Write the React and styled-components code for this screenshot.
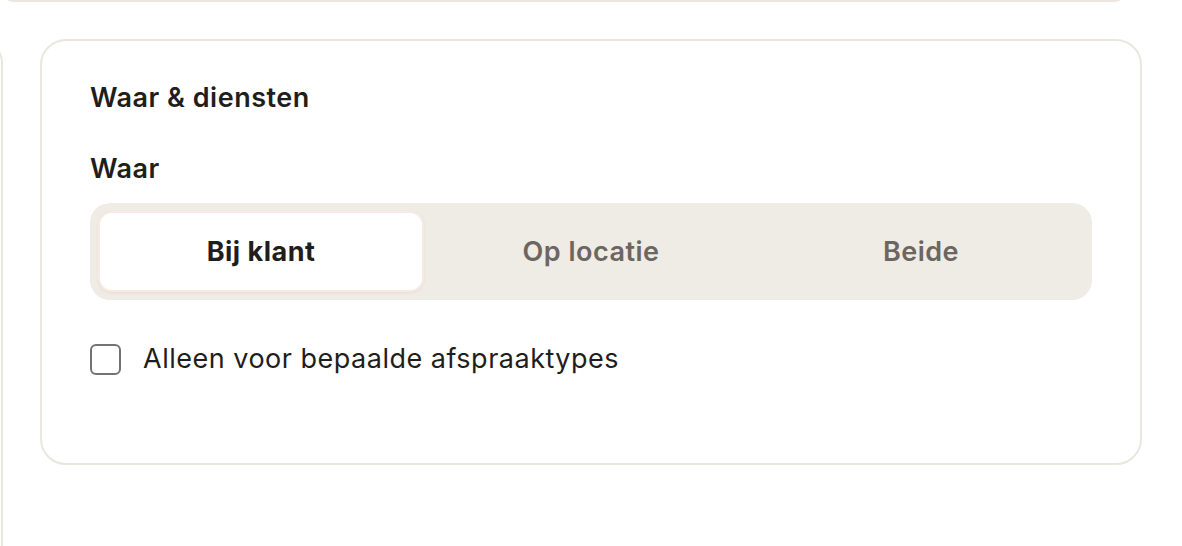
import React, { useState } from 'react';
import styled, { createGlobalStyle } from 'styled-components';

const GlobalStyle = createGlobalStyle`
  html, body {
    margin: 0;
    padding: 0;
    background: #ffffff;
  }
  body {
    font-family: Inter, "DejaVu Sans", sans-serif;
    color: #1f1e1c;
    letter-spacing: 0.5px;
    -webkit-font-smoothing: antialiased;
  }
`;

const Page = styled.div`
  width: 1182px;
  height: 546px;
  overflow: hidden;
  display: flex;
  flex-direction: column;
  gap: 37px;

  & > * {
    flex-shrink: 0;
  }
`;

const TopCard = styled.div`
  width: 1128px;
  height: 60px;
  margin-top: -58px;
  box-sizing: border-box;
  border: 2px solid #ebe6de;
  border-radius: 14px;
  background: #fff;
`;

const Row = styled.div`
  display: flex;
  align-items: flex-start;
  gap: 37px;
`;

const SideCard = styled.div`
  width: 200px;
  height: 600px;
  margin-left: -197px;
  box-sizing: border-box;
  border: 2px solid #ebe6de;
  border-radius: 24px;
  background: #fff;
  flex-shrink: 0;
`;

const Card = styled.section`
  width: 1102px;
  height: 426px;
  box-sizing: border-box;
  border: 2px solid #ebe6de;
  border-radius: 26px;
  background: #fff;
  padding: 41px 48px 0;
  display: flex;
  flex-direction: column;
  flex-shrink: 0;
`;

const Title = styled.h2`
  margin: 0;
  font-size: 27px;
  line-height: 32px;
  font-weight: 600;
  color: #1f1e1c;
`;

const Label = styled.div`
  margin-top: 39px;
  font-size: 27px;
  line-height: 32px;
  font-weight: 600;
  color: #1f1e1c;
`;

const Segmented = styled.div`
  margin-top: 18px;
  height: 97px;
  box-sizing: border-box;
  padding: 8px;
  border-radius: 20px;
  background: #efebe5;
  display: flex;
  gap: 4px;
`;

const Segment = styled.button`
  flex: 1;
  border: 2px solid ${(p) => (p.$active ? '#f8e9e3' : 'transparent')};
  border-radius: 14px;
  background: ${(p) => (p.$active ? '#ffffff' : 'transparent')};
  box-shadow: ${(p) => (p.$active ? '0 1px 3px rgba(120, 100, 80, 0.08)' : 'none')};
  font-family: inherit;
  letter-spacing: inherit;
  font-size: 27px;
  font-weight: ${(p) => (p.$active ? 700 : 600)};
  color: ${(p) => (p.$active ? '#1f1e1c' : '#6c6660')};
  cursor: pointer;
  padding: 0;
`;

const CheckRow = styled.label`
  margin-top: 43px;
  display: flex;
  align-items: center;
  gap: 22px;
  font-size: 27px;
  line-height: 32px;
  font-weight: 400;
  color: #1f1e1c;
  cursor: pointer;
`;

const Box = styled.span`
  width: 31px;
  height: 31px;
  box-sizing: border-box;
  border: 2px solid #737373;
  border-radius: 6px;
  background: ${(p) => (p.$checked ? '#1f1e1c' : '#fff')};
  flex-shrink: 0;
`;

const options = ['Bij klant', 'Op locatie', 'Beide'];

export default function App() {
  const [where, setWhere] = useState('Bij klant');
  const [onlyTypes, setOnlyTypes] = useState(false);

  return (
    <>
      <GlobalStyle />
      <Page>
        <TopCard />
        <Row>
          <SideCard />
          <Card>
            <Title>Waar &amp; diensten</Title>
            <Label>Waar</Label>
            <Segmented>
              {options.map((o) => (
                <Segment key={o} $active={where === o} onClick={() => setWhere(o)}>
                  {o}
                </Segment>
              ))}
            </Segmented>
            <CheckRow onClick={() => setOnlyTypes(!onlyTypes)}>
              <Box $checked={onlyTypes} />
              Alleen voor bepaalde afspraaktypes
            </CheckRow>
          </Card>
        </Row>
      </Page>
    </>
  );
}
